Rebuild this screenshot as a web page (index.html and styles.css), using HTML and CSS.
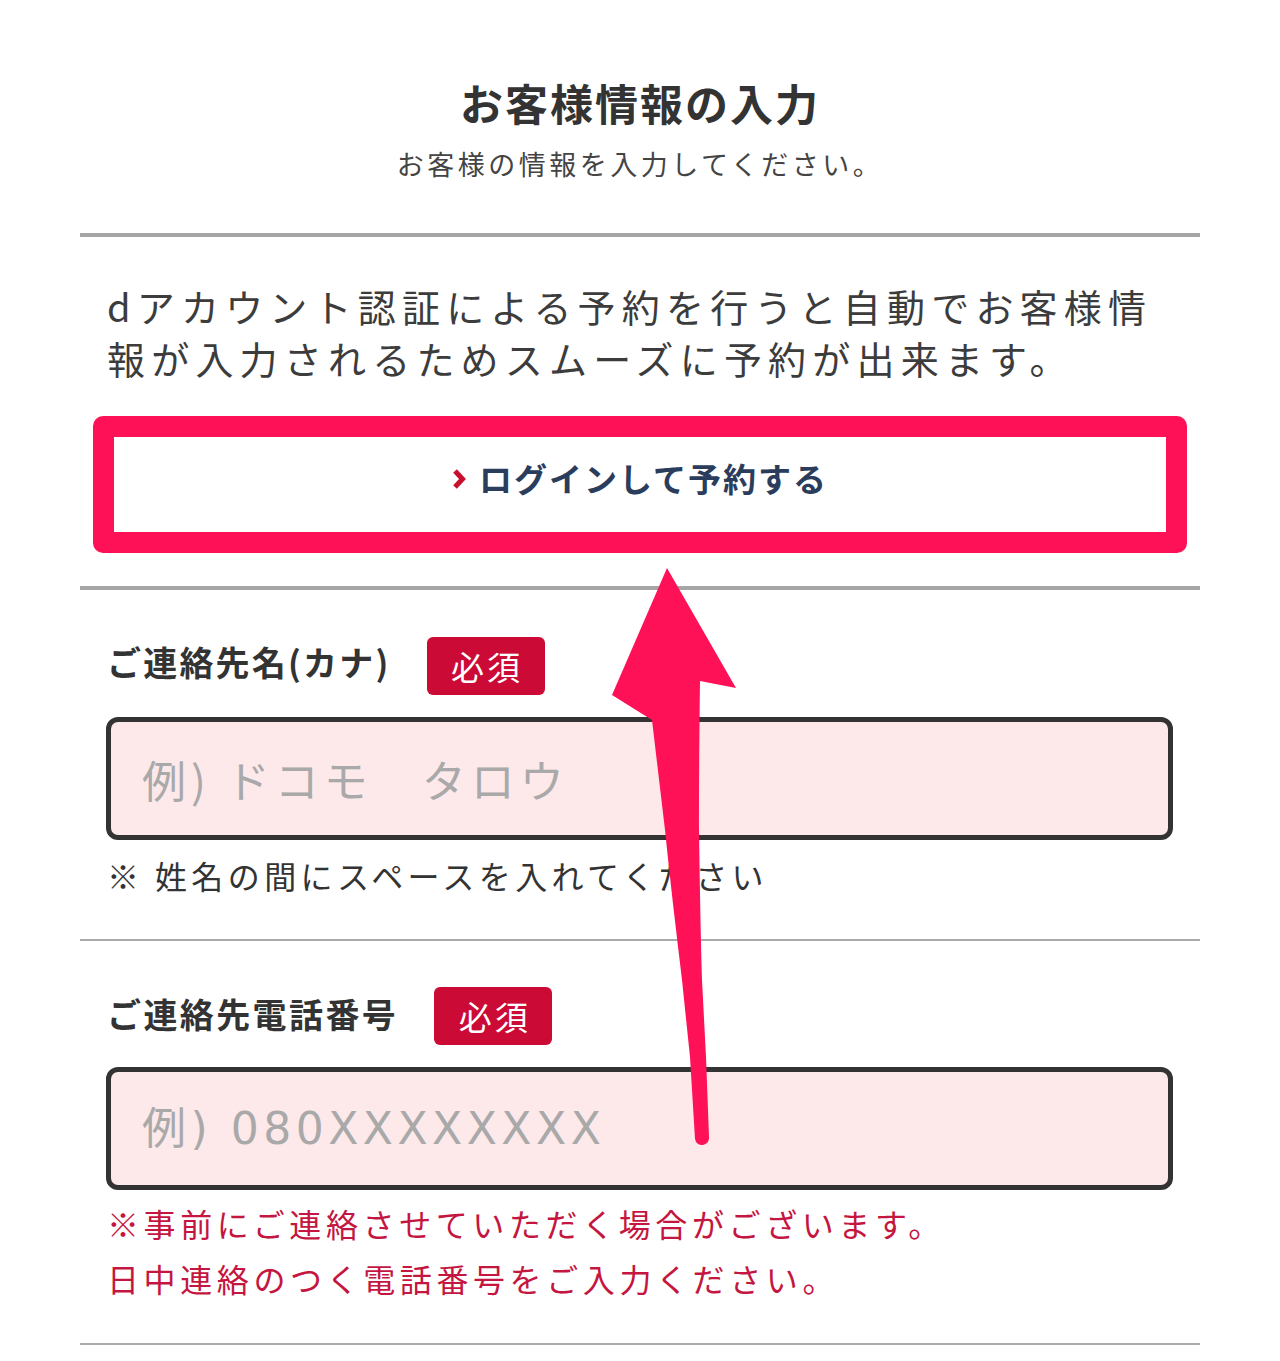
FILE: index.html
```html
<!DOCTYPE html>
<html lang="ja">
<head>
<meta charset="utf-8">
<title>お客様情報の入力</title>
<link rel="stylesheet" href="styles.css">
</head>
<body>
<div class="page">
  <header class="head">
    <h1 class="title">お客様情報の入力</h1>
    <p class="subtitle">お客様の情報を入力してください。</p>
  </header>
  <hr class="rule thick rule-1">
  <p class="lead">dアカウント認証による予約を行うと自動でお客様情<br>報が入力されるためスムーズに予約が出来ます。</p>
  <button class="login" type="button">
    <svg class="chev" width="14" height="22" viewBox="0 0 14 22"><path d="M3 3 L10.5 11 L3 19" fill="none" stroke="#c8102e" stroke-width="5" stroke-linejoin="miter"/></svg>
    <span>ログインして予約する</span>
  </button>
  <hr class="rule thick rule-2">
  <section class="field field-1">
    <div class="label-row">
      <span class="label">ご連絡先名(カナ)</span>
      <span class="badge">必須</span>
    </div>
    <input class="input input-kana" type="text" placeholder="例) ドコモ　タロウ">
    <p class="note">※ 姓名の間にスペースを入れてください</p>
  </section>
  <hr class="rule thin rule-3">
  <section class="field field-2">
    <div class="label-row">
      <span class="label label-tel">ご連絡先電話番号</span>
      <span class="badge">必須</span>
    </div>
    <input class="input input-tel" type="tel" placeholder="例) 080XXXXXXXX">
    <p class="warn">※事前にご連絡させていただく場合がございます。<br>日中連絡のつく電話番号をご入力ください。</p>
  </section>
  <hr class="rule thin rule-4">
</div>
<svg class="arrow" width="1280" height="1361" viewBox="0 0 1280 1361">
  <path d="M612 695 L667 568 L736 688 L700 681 C699 760 699 800 699 830 C700 900 701 950 702 980 L706 1057 L709 1137 A7 7 0 0 1 695 1139 L690 1057 L682 980 C676 930 670 880 665 830 L652 720 Z" fill="#ff1157"/>
</svg>
</body>
</html>
```

FILE: styles.css
```css
* { box-sizing: border-box; }
html, body { margin: 0; padding: 0; background: #fff; }
body {
  font-family: "Noto Sans CJK JP", "Noto Sans", sans-serif;
  color: #333;
  position: relative;
  min-height: 1361px;
}
.page {
  width: 1120px;
  margin: 0 auto;
  padding-top: 72px;
}
.head { text-align: center; }
.title {
  margin: 0;
  font-size: 43px;
  line-height: 60px;
  font-weight: 700;
  letter-spacing: 2px;
  color: #333;
}
.subtitle {
  margin: 14px 0 0;
  font-size: 27px;
  line-height: 36px;
  letter-spacing: 3.5px;
  color: #444;
}
.rule {
  border: 0;
  margin: 0;
  display: block;
}
.thick { height: 4px; background: #a6a6a6; }
.thin { height: 2px; background: #ababab; }
.rule-1 { margin-top: 51px; }
.lead {
  margin: 43px 0 0;
  padding-left: 27px;
  font-size: 38px;
  line-height: 52px;
  letter-spacing: 6.2px;
  color: #3c3c3c;
  white-space: nowrap;
}
.login {
  margin: 32px 0 0 13px;
  width: 1094px;
  height: 137px;
  border: 21px solid #ff1157;
  border-radius: 10px;
  background: #fff;
  display: flex;
  align-items: center;
  justify-content: center;
  gap: 13px;
  padding: 0 0 14px;
  font-family: "Noto Sans CJK JP", "Noto Sans", sans-serif;
  font-size: 33px;
  font-weight: 700;
  letter-spacing: 2px;
  color: #2b3d5c;
}
.chev { display: block; margin-top: 2px; }
.rule-2 { margin-top: 33px; }
.field { padding-left: 26px; }
.field-1 { margin-top: 47px; }
.field-2 { margin-top: 46px; }
.label-row {
  display: flex;
  align-items: center;
  height: 58px;
  padding-left: 1px;
}
.label {
  font-size: 34px;
  font-weight: 700;
  letter-spacing: 2.2px;
  color: #333;
  padding-bottom: 10px;
}
.label-tel {
  letter-spacing: 2.4px;
  padding-bottom: 6px;
}
.badge {
  margin-left: 36px;
  width: 118px;
  height: 58px;
  border-radius: 6px;
  background: #cb0a35;
  color: #fff;
  font-size: 33px;
  letter-spacing: 3px;
  padding-left: 3px;
  display: flex;
  align-items: center;
  justify-content: center;
}
.input {
  display: block;
  margin-top: 22px;
  width: 1067px;
  height: 123px;
  border: 5px solid #333;
  border-radius: 12px;
  background: #fde8ea;
  padding: 0 0 0 31px;
  font-family: "Noto Sans CJK JP", "Noto Sans", sans-serif;
  font-size: 44px;
  letter-spacing: 5px;
  color: #333;
  outline: none;
}
.input-tel {
  font-family: "DejaVu Sans", "Noto Sans CJK JP", sans-serif;
  letter-spacing: 4.5px;
}
.input::placeholder { color: #a9a9a9; opacity: 1; }
.note {
  margin: 15px 0 0;
  padding-left: 1px;
  font-size: 32px;
  line-height: 40px;
  letter-spacing: 4.4px;
  color: #333;
}
.rule-3 { margin-top: 44px; }
.warn {
  margin: 6px 0 0;
  padding-left: 1px;
  font-size: 32px;
  line-height: 55px;
  letter-spacing: 4.6px;
  color: #c41640;
}
.rule-4 { margin-top: 37px; }
.arrow {
  position: absolute;
  left: 0;
  top: 0;
  pointer-events: none;
}
```
